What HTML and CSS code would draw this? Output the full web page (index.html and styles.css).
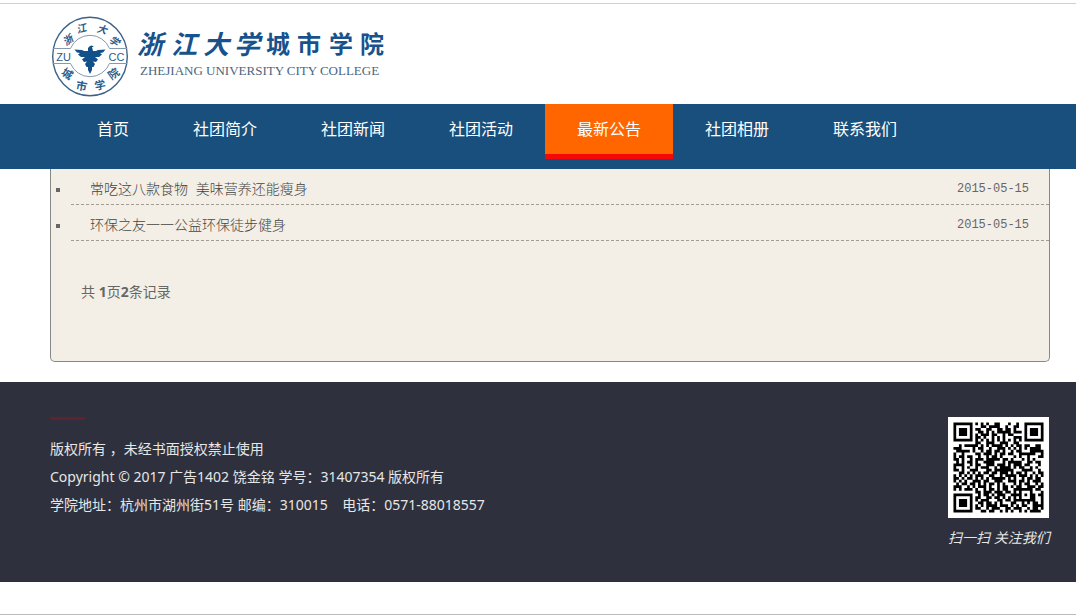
FILE: index.html
```html
<!DOCTYPE html>
<html lang="zh-CN">
	<head>
		<meta charset="utf-8">
		<meta name="viewport" content="width=device-width, initial-scale=1.0">
		<title>最新公告</title>
		<link rel="stylesheet" href="styles.css">
	</head>
	<body>
		<header class="header">
			<svg class="logo" width="340" height="84" viewBox="0 0 340 84" role="img" aria-label="浙江大学城市学院">
				<g fill="none" stroke="#3d6288">
					<ellipse cx="40" cy="42.5" rx="37.3" ry="39.2" stroke-width="1.4"/>
					<path d="M3 34.5H20.5A21 21 0 0 1 59.5 34.5H77M3 49.5H20.5A21 21 0 0 0 59.5 49.5H77" stroke="#8499ae"/>
				</g>
				<path d="M40 32L38 34L38 37L34 37L32 36L24.500 35.500L27 38.500L30 39L28 40.500L31 43L35 43L32 45.500L34 48L37 47.500L35 50L36.500 53L38 53L38 56L40 60L42 56L42 53L43.500 53L45 50L43 47.500L46 48L48 45.500L45 43L49 43L52 40.500L50 39L53 38.500L55.500 35.500L48 36L46 37L43 37L42 33L44 33L42 31.500Z" fill="#12508a"/>
				<g class="seal" text-anchor="middle">
					<text x="13.500" y="46.500" class="seal-latin">ZU</text>
					<text x="66.500" y="46.500" class="seal-latin">CC</text>
					<text transform="translate(20 29) rotate(-36)" class="seal-brush">浙</text>
					<text transform="translate(32 18) rotate(-14)" class="seal-brush">江</text>
					<text transform="translate(51 19) rotate(14)" class="seal-brush">大</text>
					<text transform="translate(62 30) rotate(36)" class="seal-brush">学</text>
					<text transform="translate(15 63) rotate(34)">城</text>
					<text transform="translate(31 76) rotate(10)">市</text>
					<text transform="translate(51 75) rotate(-12)">学</text>
					<text transform="translate(66 63) rotate(-36)">院</text>
				</g>
				<text class="brush" y="40" x="87 121 153 184">浙江大学</text>
				<text class="word" y="39" x="216 247 279 310">城市学院</text>
				<text class="latin" x="90" y="61">ZHEJIANG UNIVERSITY CITY COLLEGE</text>
			</svg>
		</header>
		<nav class="nav">
			<a href="#">首页</a>
			<a href="#">社团简介</a>
			<a href="#">社团新闻</a>
			<a href="#">社团活动</a>
			<a href="#" class="current">最新公告</a>
			<a href="#">社团相册</a>
			<a href="#">联系我们</a>
		</nav>
		<main class="wrapper">
			<div class="panel">
				<ul class="news">
					<li><a href="#">常吃这八款食物&nbsp; 美味营养还能瘦身</a><time>2015-05-15</time></li>
					<li><a href="#">环保之友一一公益环保徒步健身</a><time>2015-05-15</time></li>
				</ul>
				<p class="pages">共 <b>1</b>页<b>2</b>条记录</p>
			</div>
		</main>
		<footer class="footer">
			<div class="wrapper footer-inner">
				<div class="copyright">
					<div class="dash"></div>
					<p>版权所有 ，未经书面授权禁止使用</p>
					<p>Copyright © 2017 广告1402 饶金铭 学号：31407354 版权所有</p>
					<p>学院地址：杭州市湖州街51号 邮编：310015&nbsp; &nbsp; 电话：0571-88018557</p>
				</div>
				<div class="follow">
					<svg class="qr" viewBox="-2 -2 37 37" role="img" aria-label="二维码"><path id="qrModules"/></svg>
					<p>扫一扫 关注我们</p>
				</div>
			</div>
		</footer>
		<script src="qr.js"></script>
	</body>
</html>
```

FILE: styles.css
```css
body {
	margin: 0;
	padding: 3px 0 0;
	font-family: "Noto Sans", "Noto Sans CJK SC", sans-serif;
	font-size: 14px;
	background-color: #fff;
}

body::after {
	content: "";
	display: block;
	margin-top: 32px;
	border-top: 1px solid #bbb;
}

p {
	margin: 0;
}

a {
	color: inherit;
	text-decoration: none;
}

.header {
	padding: 10px 50px 6px;
	border-top: 1px solid #d0d0d0;
}

.logo {
	display: block;
}

.seal {
	font-family: "Noto Sans CJK SC", sans-serif;
	font-size: 11px;
	font-weight: bold;
	fill: #2d5b88;
}

.seal-brush {
	font-size: 10px;
	font-style: italic;
}

.seal-latin {
	font-family: "Liberation Sans", sans-serif;
	font-size: 11px;
	font-weight: normal;
}

.brush, .word {
	font-family: "Noto Sans CJK SC", sans-serif;
	font-weight: bold;
	fill: #17528c;
}

.brush {
	font-size: 26px;
	font-style: italic;
}

.word {
	font-size: 24px;
}

.latin {
	font-family: "Liberation Serif", serif;
	font-size: 13px;
	fill: #4a6580;
}

.nav {
	display: flex;
	height: 65px;
	padding-left: 65px;
	background-color: #194f7c;
	color: #fff;
	font-size: 16px;
	line-height: 50px;
}

.nav a {
	height: 50px;
	padding: 0 32px;
	border-bottom: 5px solid transparent;
}

.nav .current {
	background-color: #ff6600;
	border-bottom-color: #f70808;
}

.wrapper {
	max-width: 1000px;
	padding: 0 26px 0 50px;
}

.panel {
	padding-bottom: 54px;
	border: 1px solid #888;
	border-top: none;
	border-radius: 0 0 5px 5px;
	background-color: #f3efe6;
	color: #666;
}

.news {
	margin: 0;
	padding-left: 20px;
	list-style: none;
}

.news li {
	display: flex;
	justify-content: space-between;
	position: relative;
	padding: 6px 20px 0 19px;
	border-bottom: 1px dashed #a09c92;
	line-height: 29px;
}

/* the marker hangs in the list's left padding, clear of the dashed rule */
.news li::before {
	content: "";
	position: absolute;
	left: -15px;
	top: 19px;
	width: 4px;
	height: 4px;
	background-color: #666;
}

.news a {
	font-family: "Liberation Sans", "Noto Sans CJK SC", sans-serif;
	font-weight: 300;
	color: #444;
}

.news time {
	font-family: "Liberation Mono", monospace;
	font-size: 12px;
}

.pages {
	padding: 36px 0 0 30px;
	line-height: 30px;
}

.footer {
	margin-top: 20px;
	padding: 35px 0 24px;
	background-color: #2e313d;
	color: #e6e6e6;
}

.footer-inner {
	display: flex;
	justify-content: space-between;
}

.copyright {
	line-height: 28px;
}

.dash {
	width: 35px;
	height: 3px;
	margin-bottom: 15px;
	background-color: #60222b;
}

.follow {
	width: 102px;
	font-style: italic;
	line-height: 40px;
	white-space: nowrap;
}

.qr {
	display: block;
	width: 101px;
	height: 101px;
	background-color: #fff;
}
```

FILE: qr.js
```js
const modules = [
	"#######.#.#.#..##...#..#..#######",
	"#.....#...##.####..#..##..#.....#",
	"#.###.#.##..##..##.##.#...#.###.#",
	"#.###.#..##.#.#.#####.###.#.###.#",
	"#.###.#.#.###.##..#.##....#.###.#",
	"#.....#.##.#..#.#.#...###.#.....#",
	"#######.#.#.#.#.#.#.#.#.#.#######",
	"........##..###..###..##.........",
	"..#.#####.#.#.####.#.#.##.##..##.",
	"###....#.##..#..###.#.#.#.#.####.",
	".#####.#..#.##.##.#..#.##...#####",
	"#..#....##.###.#.##.##..######..#",
	"#.##.##..#..#.##.#....#.#..#...##",
	"##.#..#.###.#####.##.#...#.#.#...",
	".#.#.##.#..####...#.#####..##.##.",
	"####..#.##..###.###.#.###.##...#.",
	"#..#.#..#.###..#.####.#.##..#.#..",
	"##.#..###...##.#######...####..#.",
	"..##.#.#.#.##.##.###.#.##.#..#.##",
	"#.#.#.#.###..##..#.####.###.#.#.#",
	"##.#.##.#.#.#.#####.#.#..#.##.##.",
	"#.#.#..###.##..###..###.##.#.###.",
	".#.##.##.#.#.##.#.#...#.#.##..#.#",
	"###..#.#.###.#..#.##.#.##..###.##",
	"#.#.###.#..#.##.#.##..#######.##.",
	"........##.###.###.##.#.#...#...#",
	"#######..#.##.#.###..####.#.##.##",
	"#.....#.##..##.##.#.#.#.#...##..#",
	"#.###.#.#.###...##.##.########..#",
	"#.###.#..##.##.#.#...##..#.#.##.#",
	"#.###.#.#.#.####.###.#.#.##..####",
	"#.....#.##..#.###..##.###..#.##.#",
	"#######...##.##..#.#.#..#.#.####."
];

let path = "";
modules.forEach((row, y) => {
	[...row].forEach((cell, x) => {
		if (cell == "#") path += `M${x} ${y}h1v1h-1z`;
	});
});
document.getElementById("qrModules").setAttribute("d", path);
```
